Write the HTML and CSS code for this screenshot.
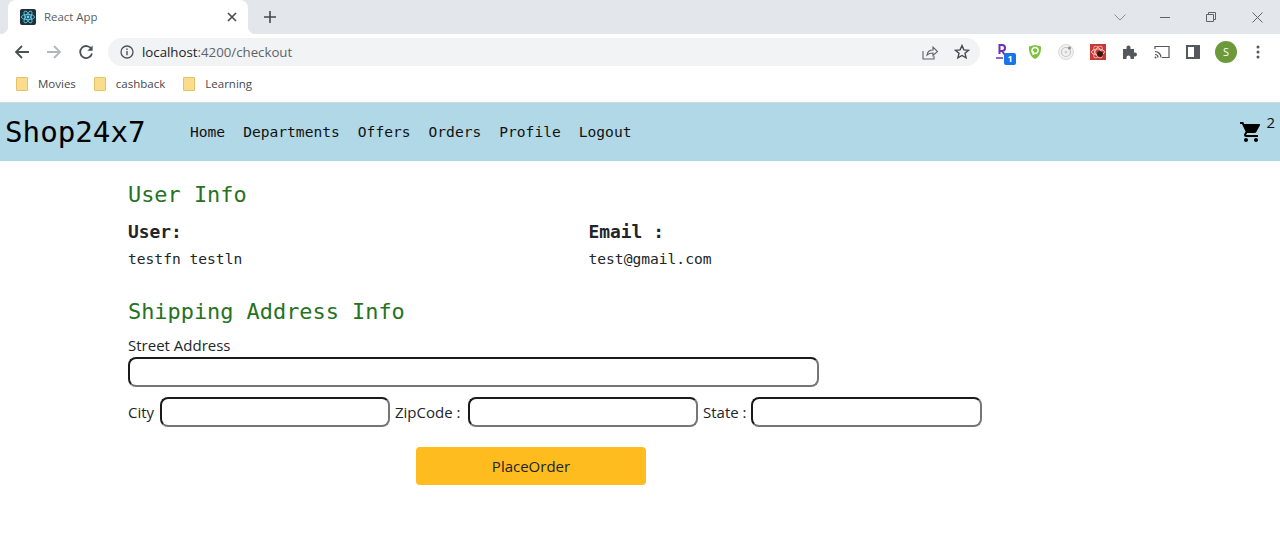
FILE: index.html
```html
<!DOCTYPE html>
<html lang="en">
<head>
  <meta charset="UTF-8" />
  <meta name="viewport" content="width=device-width, initial-scale=1.0"/>
  <title>React App</title>
  <link rel="stylesheet" href="styles.css">
</head>
<body>

  <!-- Browser chrome -->
  <div class="tabstrip">
    <div class="tab">
      <svg class="favicon" viewBox="0 0 16 16" width="16" height="16">
        <rect width="16" height="16" rx="2" fill="#20303a"/>
        <g fill="none" stroke="#61dafb" stroke-width="0.8">
          <ellipse cx="8" cy="8" rx="6.6" ry="2.6"/>
          <ellipse cx="8" cy="8" rx="6.6" ry="2.6" transform="rotate(60 8 8)"/>
          <ellipse cx="8" cy="8" rx="6.6" ry="2.6" transform="rotate(120 8 8)"/>
        </g>
        <circle cx="8" cy="8" r="1.4" fill="#61dafb"/>
      </svg>
      <span class="tab-title">React App</span>
      <svg class="tab-close" viewBox="0 0 10 10" width="10" height="10">
        <path d="M1 1l8 8M9 1l-8 8" stroke="#45494d" stroke-width="1.6"/>
      </svg>
    </div>
    <svg class="newtab" viewBox="0 0 12 12" width="12" height="12">
      <path d="M6 0v12M0 6h12" stroke="#45494d" stroke-width="1.6"/>
    </svg>
    <div class="window-btns">
      <svg viewBox="0 0 12 7" width="12" height="7"><path d="M.5.5L6 6l5.5-5.5" fill="none" stroke="#8a8d91"/></svg>
      <svg class="win-min" viewBox="0 0 10 1" width="10" height="1"><path d="M0 .5h10" stroke="#5f6368"/></svg>
      <svg class="win-max" viewBox="0 0 10 10" width="10" height="10"><path d="M.5 2.5h7v7h-7zM2.5 2.5v-2h7v7h-2" fill="none" stroke="#5f6368"/></svg>
      <svg class="win-close" viewBox="0 0 11 11" width="11" height="11"><path d="M.5.5l10 10M10.5.5l-10 10" stroke="#5f6368"/></svg>
    </div>
  </div>

  <div class="toolbar">
    <svg class="tool" viewBox="0 0 16 16" width="16" height="16"><path d="M15 8H2M8 2L2 8l6 6" fill="none" stroke="#4d5156" stroke-width="1.8"/></svg>
    <svg class="tool" viewBox="0 0 16 16" width="16" height="16"><path d="M1 8h13M8 2l6 6-6 6" fill="none" stroke="#b4b7ba" stroke-width="1.8"/></svg>
    <svg class="tool" viewBox="0 0 16 16" width="16" height="16"><path d="M13.5 5.2A6 6 0 1 0 14 9.5" fill="none" stroke="#4d5156" stroke-width="1.8"/><path d="M14.6 1.5v5.2H9.4z" fill="#4d5156"/></svg>
    <div class="omnibox">
      <svg viewBox="0 0 14 14" width="14" height="14"><circle cx="7" cy="7" r="6" fill="none" stroke="#4d5156" stroke-width="1.3"/><path d="M7 6v4.2M7 3.6v1.4" stroke="#4d5156" stroke-width="1.4"/></svg>
      <span class="url">localhost<span class="url-path">:4200/checkout</span></span>
      <svg class="omni-share" viewBox="0 0 16 16" width="16" height="16"><path d="M1 7v8h11v-3M5 11c.5-3.500 3-5 6-5V3l4.500 4.500L11 11.500V9c-2.500 0-4.500.500-6 2z" fill="none" stroke="#5f6368" stroke-width="1.1"/></svg>
      <svg class="omni-star" viewBox="0 0 16 16" width="16" height="16"><path d="M8 1.600l1.900 4.300 4.600.400-3.500 3 1.100 4.600L8 11.500l-4.100 2.400L5 9.300l-3.500-3 4.600-.400z" fill="none" stroke="#45494d" stroke-width="1.4"/></svg>
    </div>
    <div class="extensions">
      <div class="ext-r">
        <svg viewBox="0 0 14 18" width="14" height="18"><path d="M3.500 1v10M3.500 2H6a3 3 0 0 1 0 6H3.500M6 8l3 4" fill="none" stroke="#6b2fb5" stroke-width="2"/><path d="M0 15h7" stroke="#6b2fb5" stroke-width="1.500"/></svg>
        <span class="ext-badge">1</span>
      </div>
      <svg viewBox="0 0 14 16" width="14" height="16"><path d="M1 2.500L7 1l6 1.500c.300 5-1 10-6 12.500C2 12.500.700 7.500 1 2.500z" fill="#7cc242"/><circle cx="7" cy="6.500" r="3" fill="none" stroke="#fff" stroke-width="1.500"/><path d="M5.200 7v4" stroke="#fff" stroke-width="1.500"/></svg>
      <svg viewBox="0 0 16 16" width="16" height="16"><circle cx="8" cy="8" r="7.500" fill="#f2f2f2" stroke="#cfcfcf" stroke-width=".8"/><circle cx="8" cy="8" r="4.500" fill="none" stroke="#c4c4c4" stroke-width="1.200"/><circle cx="8" cy="8" r="1.500" fill="#d0d0d0"/><circle cx="11.500" cy="4" r="1.500" fill="#8b8b8b"/></svg>
      <svg viewBox="0 0 16 16" width="16" height="16"><rect width="16" height="16" fill="#c53a32"/><g fill="none" stroke="#f3c0bb" stroke-width="1"><ellipse cx="8" cy="8" rx="6.500" ry="3"/><ellipse cx="8" cy="8" rx="6.500" ry="3" transform="rotate(60 8 8)"/><ellipse cx="8" cy="8" rx="6.500" ry="3" transform="rotate(120 8 8)"/></g><circle cx="10" cy="10" r="3" fill="#3c1512"/></svg>
      <svg viewBox="0 0 16 16" width="16" height="16"><path d="M1 5h3.500V3.500a2 2 0 0 1 4 0V5H12v3.500h1a2 2 0 0 1 0 4h-1V15H8.500v-1.500a2 2 0 0 0-4 0V15H1z" fill="#54585d"/></svg>
      <svg viewBox="0 0 16 14" width="16" height="14"><path d="M1 4V1.500h14v11H8M1 6.500a6 6 0 0 1 6 6M1 9.500a3 3 0 0 1 3 3" fill="none" stroke="#54585d" stroke-width="1.200"/><circle cx="1.500" cy="12.500" r="1" fill="#54585d"/></svg>
      <svg viewBox="0 0 14 14" width="14" height="14"><path d="M0 0h14v14H0z" fill="#54585d"/><path d="M2 2h6v10H2z" fill="#fff"/></svg>
      <span class="avatar">S</span>
      <svg class="kebab" viewBox="0 0 4 14" width="4" height="14"><circle cx="2" cy="2" r="1.500" fill="#54585d"/><circle cx="2" cy="7" r="1.500" fill="#54585d"/><circle cx="2" cy="12" r="1.500" fill="#54585d"/></svg>
    </div>
  </div>

  <div class="bookmarks">
    <a class="bookmark"><span class="folder"></span>Movies</a>
    <a class="bookmark"><span class="folder"></span>cashback</a>
    <a class="bookmark"><span class="folder"></span>Learning</a>
  </div>

  <!-- Navbar -->
  <nav class="navbar">
    <span class="brand">Shop24x7</span>
    <ul class="nav-links">
      <li>Home</li>
      <li>Departments</li>
      <li>Offers</li>
      <li>Orders</li>
      <li>Profile</li>
      <li>Logout</li>
    </ul>
    <div class="cart">
      <svg viewBox="0 0 24 24" width="24" height="24"><path d="M7 18c-1.100 0-1.990.900-1.990 2S5.900 22 7 22s2-.900 2-2-.900-2-2-2zM1 2v2h2l3.600 7.590-1.350 2.450c-.160.280-.250.610-.250.960 0 1.100.900 2 2 2h12v-2H7.420c-.140 0-.250-.110-.250-.250l.030-.120.900-1.630h7.450c.750 0 1.410-.410 1.750-1.030l3.580-6.490A1 1 0 0 0 20 4H5.210l-.940-2H1zm16 16c-1.100 0-1.990.900-1.990 2s.890 2 1.990 2 2-.900 2-2-.900-2-2-2z" fill="#000"/></svg>
      <span class="cart-count">2</span>
    </div>
  </nav>

  <!-- Checkout -->
  <main class="checkout">
    <h2 class="section-title">User Info</h2>
    <div class="info-row">
      <div>
        <h3>User:</h3>
        <p>testfn testln</p>
      </div>
      <div>
        <h3>Email :</h3>
        <p>test@gmail.com</p>
      </div>
    </div>

    <h2 class="section-title address-title">Shipping Address Info</h2>
    <form>
      <label class="street-label" for="street">Street Address</label>
      <input class="street" id="street" type="text">
      <div class="city-row">
        <label for="city">City</label>
        <input id="city" type="text">
        <label for="zip">ZipCode :</label>
        <input id="zip" type="text">
        <label for="state">State :</label>
        <input id="state" type="text">
      </div>
      <button class="place-order" type="button">PlaceOrder</button>
    </form>
  </main>

</body>
</html>
```

FILE: styles.css
```css
* {
  box-sizing: border-box;
}

body {
  font-family: 'Open Sans', sans-serif;
  background: #fff;
  color: #212529;
  margin: 0;
}

/* Browser chrome */
.tabstrip {
  height: 34px;
  background: #e3e7eb;
  display: flex;
  align-items: center;
  padding-left: 8px;
}

.tab {
  position: relative;
  width: 240px;
  height: 34px;
  background: #fff;
  border-radius: 8px 8px 0 0;
  display: flex;
  align-items: center;
  padding: 0 11px 0 12px;
}

/* little flares at the bottom of the active tab */
.tab::before,
.tab::after {
  content: '';
  position: absolute;
  bottom: 0;
  width: 8px;
  height: 8px;
}

.tab::before {
  left: -8px;
  background: radial-gradient(circle at 0 0, transparent 8px, #fff 8.5px);
}

.tab::after {
  right: -8px;
  background: radial-gradient(circle at 100% 0, transparent 8px, #fff 8.5px);
}

.favicon {
  margin-right: 8px;
}

.tab-title {
  flex: 1;
  font-size: 11.4px;
  color: #5a5e63;
  padding-bottom: 1px;
}

.newtab {
  margin-left: 16px;
}

.window-btns {
  margin-left: auto;
  display: flex;
  align-items: center;
  padding-right: 17px;
}

.win-min {
  margin-left: 34px;
}

.win-max {
  margin-left: 36px;
}

.win-close {
  margin-left: 36px;
}

.toolbar {
  height: 34px;
  display: flex;
  align-items: center;
  padding: 2px 0 0 14px;
  background: #fff;
}

.tool {
  margin-right: 16px;
}

.omnibox {
  width: 872px;
  height: 28px;
  margin-left: -2px;
  border-radius: 14px;
  background: #f1f3f4;
  display: flex;
  align-items: center;
  padding: 0 10px 0 12px;
}

.url {
  flex: 1;
  margin-left: 8px;
  font-size: 13.25px;
  color: #202124;
}

.url-path {
  color: #5f6368;
}

.omni-star {
  margin-left: 16px;
}

.extensions {
  display: flex;
  align-items: center;
  gap: 16px;
  padding-left: 16px;
}

.ext-r {
  position: relative;
  width: 16px;
  height: 18px;
}

.ext-badge {
  position: absolute;
  left: 8px;
  top: 10px;
  width: 12px;
  height: 12px;
  border-radius: 2px;
  background: #1a73e8;
  color: #fff;
  font-size: 9px;
  font-weight: 700;
  line-height: 12px;
  text-align: center;
}

.avatar {
  width: 22px;
  height: 22px;
  margin-left: -1px;
  border-radius: 50%;
  background: #6c9a3a;
  color: #fff;
  font-size: 11px;
  line-height: 22px;
  text-align: center;
}

.kebab {
  margin-left: 3px;
}

.bookmarks {
  height: 35px;
  display: flex;
  align-items: center;
  padding: 0 0 3px 16px;
  border-bottom: 1px solid #d4d8dc;
}

.bookmark {
  display: flex;
  align-items: center;
  font-size: 11.5px;
  color: #45494d;
  margin-right: 18px;
}

.folder {
  width: 12px;
  height: 14px;
  margin-right: 10px;
  background: #fbdc8c;
  border: 1px solid #e4c167;
  border-radius: 1px;
}

/* Navbar */
.navbar {
  height: 58px;
  background: #b1d8e6;
  display: flex;
  align-items: center;
  font-family: 'DejaVu Sans Mono', monospace;
  color: #111;
}

.brand {
  font-size: 29.2px;
  padding-left: 5px;
  width: 190px;
  color: #000;
}

.nav-links {
  list-style: none;
  display: flex;
  gap: 18px;
  margin: 0;
  padding: 0 0 2px;
  font-size: 14.6px;
}

.cart {
  margin-left: auto;
  display: flex;
  align-items: flex-start;
  padding-right: 5px;
  height: 40px;
  position: relative;
  top: 1px;
}

.cart svg {
  margin-top: 7px;
}

.cart-count {
  font-family: 'Open Sans', sans-serif;
  font-size: 15px;
  margin: -1px 0 0 3px;
}

/* Checkout */
.checkout {
  padding: 19px 128px 0;
}

.section-title {
  margin: 0;
  font-family: 'DejaVu Sans Mono', monospace;
  font-size: 21.9px;
  line-height: 29px;
  font-weight: 400;
  color: #26721f;
}

.info-row {
  display: grid;
  grid-template-columns: 460.5px 1fr;
  margin-top: 11px;
  font-family: 'DejaVu Sans Mono', monospace;
}

.info-row h3 {
  margin: 0;
  font-size: 17.9px;
  line-height: 24px;
  font-weight: 700;
}

.info-row p {
  margin: 5px 0 0;
  font-size: 14.6px;
  line-height: 20px;
}

.address-title {
  margin-top: 28px;
}

form {
  margin-top: 8px;
  font-size: 15px;
}

.street-label {
  display: block;
  line-height: 23px;
}

input {
  height: 30px;
  padding: 0 8px;
  background: #fff;
  border: 2px solid;
  border-color: #1a1a1a #767676 #767676 #1a1a1a;
  border-radius: 8px;
}

.street {
  display: block;
  width: 691px;
}

.city-row {
  display: grid;
  grid-template-columns: 27px 230px 68px 230px 43px 231px;
  column-gap: 5px;
  align-items: center;
  margin-top: 10px;
}

.city-row label {
  white-space: nowrap;
}

.city-row input {
  width: 100%;
}

.place-order {
  display: block;
  width: 230px;
  height: 38px;
  margin: 20px 0 0 288px;
  font-family: inherit;
  font-size: 15px;
  color: #212529;
  background: #ffbc1f;
  border: 0;
  border-radius: 4px;
}
```
